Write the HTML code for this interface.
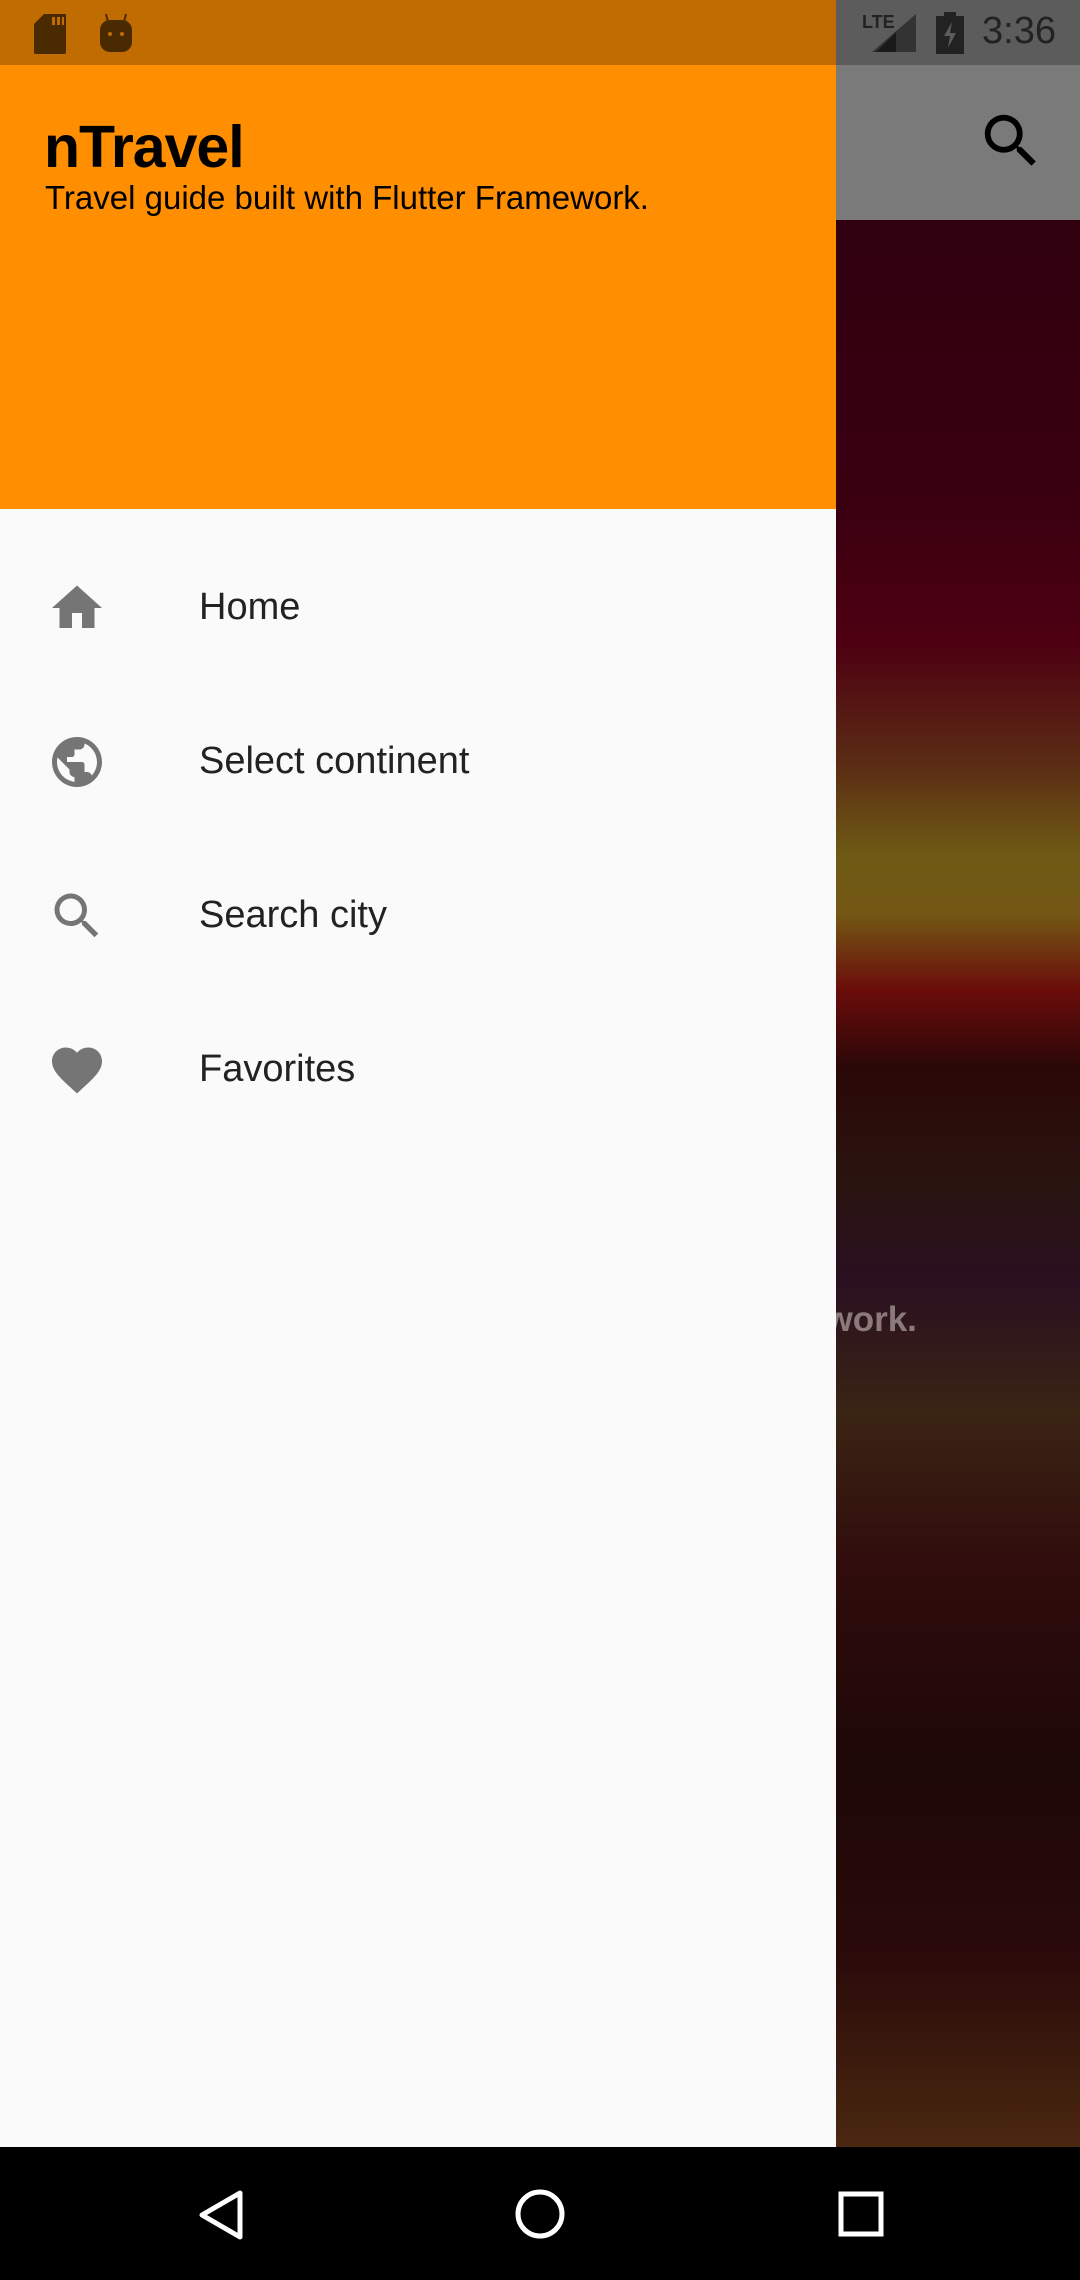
<!DOCTYPE html>
<html><head><meta charset="utf-8"><style>
*{margin:0;padding:0;box-sizing:border-box}
body{width:1080px;height:2280px;position:relative;overflow:hidden;font-family:"Liberation Sans",sans-serif;background:#000}
.bg{position:absolute;left:836px;top:220px;width:244px;height:1927px;
background:linear-gradient(180deg,#300010 0%,#3a0010 15%,#4e0012 22%,#5a2a14 28%,#6e5a14 33%,#735814 36%,#6a0c0a 40%,#2a0808 44%,#2a1410 50%,#2a1020 55%,#3a2414 62%,#300c0c 70%,#1e0808 80%,#2a0a0a 90%,#4a2810 100%)}
.appbar{position:absolute;left:836px;top:65px;width:244px;height:155px;background:#7a7a7a}
.sb{position:absolute;top:0;height:65px}
.drawer{position:absolute;left:0;top:65px;width:836px;height:2082px;background:#fafafa}
.head{position:absolute;left:0;top:0;width:836px;height:444px;background:#ff8f00}
.t{position:absolute;left:44px;top:48px;font-size:59px;font-weight:bold;color:#000;letter-spacing:-1px}
.s{position:absolute;left:45px;top:114px;font-size:33px;color:#000}
.item{position:absolute;left:199px;font-size:38px;color:#222}
.ic{position:absolute;left:47px;width:60px;height:60px}
.nav{position:absolute;left:0;top:2147px;width:1080px;height:133px;background:#000}
</style></head><body>
<div class="bg"></div>
<div style="position:absolute;left:836px;top:1300px;font-size:35px;font-weight:bold;color:#8a7a7a;margin-left:-30px;clip-path:inset(0 0 0 30px)">ework.</div>
<div class="appbar"></div>
<svg style="position:absolute;left:976px;top:106px" width="70" height="70" viewBox="0 0 24 24"><path fill="#000" d="M15.5 14h-.79l-.28-.27A6.47 6.47 0 0016 9.5 6.5 6.5 0 109.5 16c1.61 0 3.09-.59 4.23-1.57l.27.28v.79l5 4.99L20.49 19l-4.99-5zm-6 0C7.01 14 5 11.99 5 9.5S7.010 5 9.5 5 14 7.01 14 9.5 11.99 14 9.5 14z"/></svg>
<div class="sb" style="left:0;width:836px;background:#c06c00"></div>
<div class="sb" style="left:836px;width:244px;background:#5c5c5c"></div>
<svg style="position:absolute;left:34px;top:14px" width="34" height="40" viewBox="0 0 17 20"><path fill="#4a2a00" d="M5 0h11v19a1 1 0 01-1 1H1a1 1 0 01-1-1V5z"/><path fill="#c06c00" d="M9 1.5h1.5v4H9zM11.5 1.5H13v4h-1.5zM14 1.5h1v4h-1z"/></svg>
<svg style="position:absolute;left:98px;top:12px" width="36" height="40" viewBox="0 0 18 20"><path stroke="#4a2a00" stroke-width="1" d="M5 5L4 1M13 5l1-4"/><rect x="1" y="4" width="16" height="16" rx="5" fill="#4a2a00"/><circle cx="6" cy="11" r="1" fill="#c06c00"/><circle cx="12" cy="11" r="1" fill="#c06c00"/></svg>
<div style="position:absolute;left:862px;top:12px;font-size:18px;font-weight:bold;color:#222">LTE</div>
<svg style="position:absolute;left:872px;top:14px" width="44" height="38"><path d="M44 0V38H0z" fill="#333"/><path d="M24 18V38H4z" fill="#1a1a1a"/></svg>
<svg style="position:absolute;left:936px;top:12px" width="28" height="42"><rect x="0" y="4" width="28" height="38" fill="#222"/><rect x="8" y="0" width="12" height="5" fill="#222"/><path d="M16 10l-8 14h6l-2 12 8-15h-6z" fill="#5c5c5c"/></svg>
<div style="position:absolute;left:982px;top:10px;font-size:38px;color:#222">3:36</div>
<div class="drawer">
<div class="head"><div class="t">nTravel</div><div class="s">Travel guide built with Flutter Framework.</div></div>
<svg class="ic" style="top:513px" viewBox="0 0 24 24"><path fill="#757575" d="M10 20v-6h4v6h5v-8h3L12 3 2 12h3v8z"/></svg>
<div class="item" style="top:521px">Home</div>
<svg class="ic" style="top:667px" viewBox="0 0 24 24"><path fill="#757575" d="M12 2C6.48 2 2 6.48 2 12s4.48 10 10 10 10-4.48 10-10S17.52 2 12 2zm-1 17.930c-3.95-.49-7-3.85-7-7.93 0-.62.08-1.21.21-1.79L9 15v1c0 1.1.9 2 2 2v1.93zm6.9-2.54c-.26-.81-1-1.39-1.9-1.39h-1v-3c0-.55-.45-1-1-1H8v-2h2c.55 0 1-.45 1-1V7h2c1.1 0 2-.9 2-2v-.41c2.93 1.19 5 4.06 5 7.41 0 2.08-.8 3.97-2.1 5.39z"/></svg>
<div class="item" style="top:675px">Select continent</div>
<svg class="ic" style="top:821px" viewBox="0 0 24 24"><path fill="#757575" d="M15.5 14h-.79l-.28-.27A6.47 6.47 0 0016 9.5 6.5 6.5 0 109.5 16c1.61 0 3.09-.59 4.23-1.57l.27.28v.79l5 4.99L20.49 19l-4.99-5zm-6 0C7.01 14 5 11.99 5 9.5S7.01 5 9.5 5 14 7.01 14 9.5 11.99 14 9.5 14z"/></svg>
<div class="item" style="top:829px">Search city</div>
<svg class="ic" style="top:975px" viewBox="0 0 24 24"><path fill="#757575" d="M12 21.35l-1.45-1.32C5.4 15.36 2 12.28 2 8.5 2 5.42 4.42 3 7.5 3c1.74 0 3.41.81 4.5 2.09C13.09 3.81 14.76 3 16.5 3 19.58 3 22 5.42 22 8.5c0 3.78-3.4 6.86-8.55 11.54L12 21.35z"/></svg>
<div class="item" style="top:983px">Favorites</div>
</div>
<div class="nav">
<svg style="position:absolute;left:196px;top:42px" width="48" height="52"><path d="M44 4V48L6 26z" fill="none" stroke="#fff" stroke-width="5" stroke-linejoin="round"/></svg>
<svg style="position:absolute;left:514px;top:41px" width="52" height="52"><circle cx="26" cy="26" r="22" fill="none" stroke="#fff" stroke-width="5"/></svg>
<svg style="position:absolute;left:838px;top:44px" width="46" height="46"><rect x="3" y="3" width="40" height="40" fill="none" stroke="#fff" stroke-width="5"/></svg>
</div>
</body></html>
